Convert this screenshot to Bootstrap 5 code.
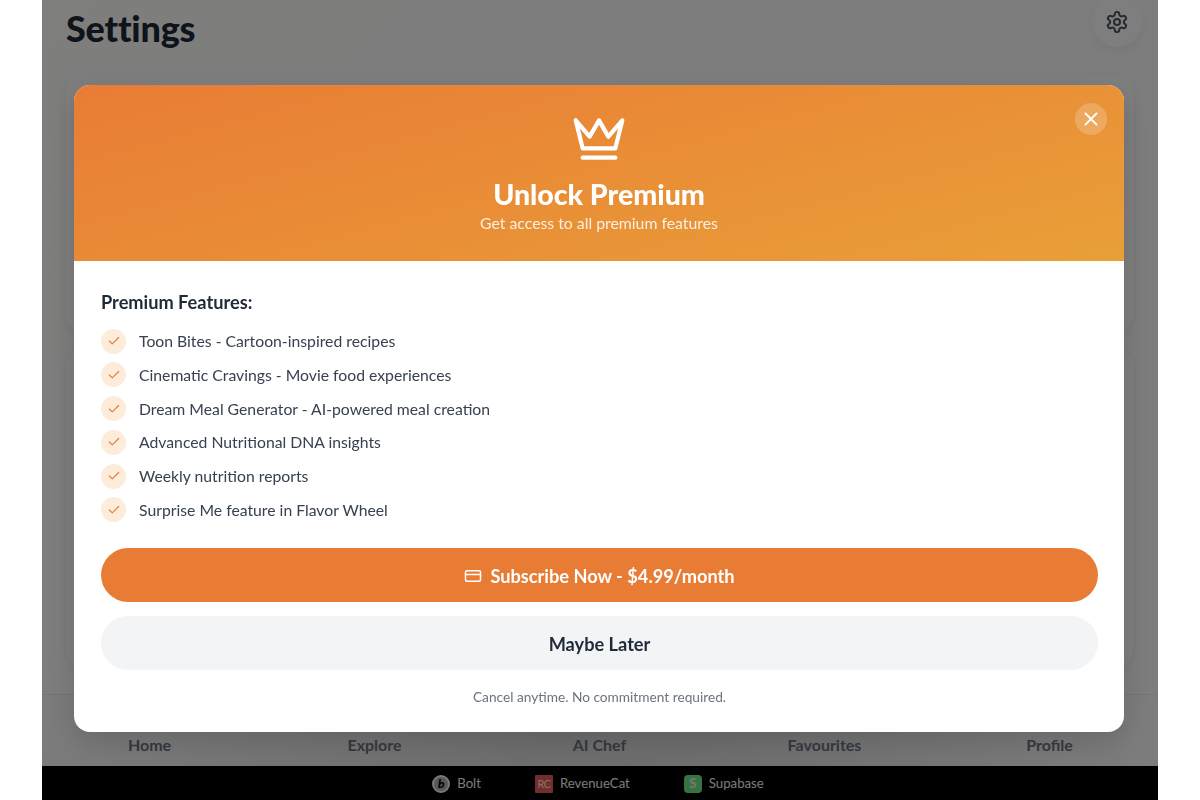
<!DOCTYPE html>
<html lang="en">
<head>
    <meta charset="UTF-8">
    <meta name="viewport" content="width=device-width, initial-scale=1.0">
    <title>Settings</title>
    <link rel="stylesheet" href="https://cdn.jsdelivr.net/npm/bootstrap@5.3.2/dist/css/bootstrap.min.css">
    <style>
        html, body {
            height: 100%;
            overflow: hidden;
        }
        body {
            background: #fff;
            font-family: Lato, "Noto Sans", sans-serif;
            color: #1f2937;
        }
        .app-frame {
            width: 1116px;
            height: 800px;
            margin: 0 auto;
            background: linear-gradient(135deg, #fcfcfb, #fafafa);
        }
        .page-head {
            margin-top: -3px;
            padding: 0 16px 0 24px;
            height: 78px;
        }
        .page-title {
            font-size: 36px;
            font-weight: 900;
            color: #1f2937;
            margin: 10px 0 0;
            letter-spacing: -.2px;
        }
        .gear-btn {
            width: 50px;
            height: 50px;
            background: #fdfdfd;
            box-shadow: 0 4px 12px rgba(0, 0, 0, .06);
            color: #4b5563;
        }
        .page-body {
            padding: 0 25px 0 24px;
            height: 619px;
        }
        .bg-panel {
            border-radius: 14px;
            background: #fdfdfd;
            box-shadow: 0 2px 10px rgba(0, 0, 0, .06);
        }
        .bg-panel-a { height: 255px; margin-bottom: 20px; }
        .bg-panel-b { height: 315px; }
        .tab-bar {
            height: 72px;
            border-top: 1px solid #e9eaea;
            background: linear-gradient(100deg, #f8f8f8, #dcdcdc 45%, #dedede 60%, #fafafa);
        }
        .tab-row { margin: 0 -4px 0 -5px; width: calc(100% + 9px); }
        .tab-item {
            flex: 1 1 0;
            text-align: center;
            padding-top: 38px;
            font-size: 16px;
            font-weight: 700;
            color: #6b7280;
        }
        .credit-bar {
            height: 34px;
            padding: 2px 4px 0 0;
            background: #000;
            font-size: 13.2px;
            color: #f3f4f6;
        }
        .credit-item { gap: 7px; }
        .credit-item + .credit-item { margin-left: 54px; }
        .credit-bolt {
            width: 18px;
            height: 18px;
            background: #b0b0b0;
            color: #000;
            font-size: 12px;
            font-weight: 900;
            font-style: italic;
            border: 2px solid #f0f0f0;
        }
        .credit-rc, .credit-s {
            width: 18px;
            height: 18px;
        }
        .credit-rc {
            background: #e65a5a;
            color: #fbe3e3;
            font-size: 11px;
            letter-spacing: -.5px;
            border-radius: 1px;
        }
        .credit-s {
            background: #6ee682;
            color: #f0f0f0;
            font-size: 13px;
            font-weight: 700;
            border-radius: 4px;
        }
        .dim-layer {
            position: fixed;
            top: 0;
            bottom: 0;
            left: 42px;
            width: 1116px;
            padding-top: 85px;
            background: rgba(0, 0, 0, .5);
        }
        .promo-box {
            width: 1050px;
            height: 647px;
            margin-left: 32px;
            background: #fff;
            border-radius: 16px;
            overflow: hidden;
            box-shadow: 0 10px 30px rgba(0, 0, 0, .15);
        }
        .promo-head {
            position: relative;
            height: 176px;
            padding-top: 26px;
            color: #fff;
            background: linear-gradient(165deg, #e97c35, #e99f38);
        }
        .promo-title {
            font-size: 28.5px;
            font-weight: 900;
            margin: 10px 0 0;
            line-height: 34px;
        }
        .promo-sub {
            font-size: 15.8px;
            line-height: 22px;
            margin-top: 1px;
            color: rgba(255, 255, 255, .85);
        }
        .close-btn {
            position: absolute;
            top: 18px;
            right: 17px;
            width: 32px;
            height: 32px;
            background: rgba(255, 255, 255, .2);
            color: #fff;
        }
        .promo-body {
            padding: 29px 26px 0 27px;
        }
        .feat-heading {
            font-size: 18.2px;
            font-weight: 700;
            line-height: 24px;
            margin-bottom: 14.5px;
            color: #1f2937;
        }
        .feat-row {
            height: 25px;
            margin-bottom: 8.75px;
            font-size: 15.75px;
            color: #374151;
            gap: 13px;
        }
        .feat-tick {
            width: 25px;
            height: 25px;
            background: #fdecd9;
            color: #e97c35;
            flex-shrink: 0;
        }
        .btn-subscribe, .btn-later {
            width: 100%;
            height: 54px;
            border: 0;
            border-radius: 27px;
            font-size: 18.2px;
            font-weight: 700;
            padding-top: 3px;
        }
        .btn-subscribe {
            margin-top: 26px;
            background: #e97c35;
            color: #fff;
            gap: 8px;
        }
        .btn-later {
            margin-top: 14px;
            background: #f3f4f6;
            color: #1f2937;
        }
        .fine-print {
            margin-top: 18px;
            font-size: 13.7px;
            line-height: 18px;
            color: #6b7280;
            text-align: center;
        }
    </style>
</head>
<body>

    <div class="app-frame d-flex flex-column">
        <div class="page-head d-flex justify-content-between align-items-start">
            <h1 class="page-title">Settings</h1>
            <div class="gear-btn rounded-circle d-flex align-items-center justify-content-center">
                <svg width="24" height="24" viewBox="0 0 24 24" fill="none" stroke="currentColor" stroke-width="2" stroke-linecap="round" stroke-linejoin="round"><path d="M12.22 2h-.44a2 2 0 0 0-2 2v.18a2 2 0 0 1-1 1.73l-.43.25a2 2 0 0 1-2 0l-.15-.08a2 2 0 0 0-2.73.73l-.22.38a2 2 0 0 0 .73 2.73l.15.1a2 2 0 0 1 1 1.72v.51a2 2 0 0 1-1 1.74l-.15.09a2 2 0 0 0-.73 2.73l.22.38a2 2 0 0 0 2.73.73l.15-.08a2 2 0 0 1 2 0l.43.25a2 2 0 0 1 1 1.73V20a2 2 0 0 0 2 2h.44a2 2 0 0 0 2-2v-.18a2 2 0 0 1 1-1.73l.43-.25a2 2 0 0 1 2 0l.15.08a2 2 0 0 0 2.73-.73l.22-.39a2 2 0 0 0-.73-2.73l-.15-.08a2 2 0 0 1-1-1.74v-.5a2 2 0 0 1 1-1.74l.15-.09a2 2 0 0 0 .73-2.73l-.22-.38a2 2 0 0 0-2.73-.73l-.15.08a2 2 0 0 1-2 0l-.43-.25a2 2 0 0 1-1-1.73V4a2 2 0 0 0-2-2z"/><circle cx="12" cy="12" r="3"/></svg>
            </div>
        </div>

        <div class="page-body">
            <div class="bg-panel bg-panel-a"></div>
            <div class="bg-panel bg-panel-b"></div>
        </div>

        <div class="tab-bar">
            <div class="tab-row d-flex">
                <div class="tab-item">Home</div>
                <div class="tab-item">Explore</div>
                <div class="tab-item">AI Chef</div>
                <div class="tab-item">Favourites</div>
                <div class="tab-item">Profile</div>
            </div>
        </div>

        <div class="credit-bar d-flex align-items-center justify-content-center">
            <div class="credit-item d-flex align-items-center">
                <span class="credit-bolt rounded-circle d-flex align-items-center justify-content-center">b</span>
                <span>Bolt</span>
            </div>
            <div class="credit-item d-flex align-items-center">
                <span class="credit-rc d-flex align-items-center justify-content-center">RC</span>
                <span>RevenueCat</span>
            </div>
            <div class="credit-item d-flex align-items-center">
                <span class="credit-s d-flex align-items-center justify-content-center">S</span>
                <span>Supabase</span>
            </div>
        </div>
    </div>

    <div class="dim-layer">
        <div class="promo-box">
            <div class="promo-head text-center">
                <div class="close-btn rounded-circle d-flex align-items-center justify-content-center">
                    <svg width="22" height="22" viewBox="0 0 24 24" fill="none" stroke="currentColor" stroke-width="2" stroke-linecap="round" stroke-linejoin="round"><path d="M18 6 6 18M6 6l12 12"/></svg>
                </div>
                <svg class="d-block mx-auto" width="56" height="56" viewBox="0 0 24 24" fill="none" stroke="currentColor" stroke-width="1.8" stroke-linecap="round" stroke-linejoin="round"><path d="m2 4 3 12h14l3-12-6 7-4-7-4 7-6-7z"/><path d="M5 20h14"/></svg>
                <h2 class="promo-title">Unlock Premium</h2>
                <div class="promo-sub">Get access to all premium features</div>
            </div>
            <div class="promo-body">
                <div class="feat-heading">Premium Features:</div>
                <div class="feat-row d-flex align-items-center"><span class="feat-tick rounded-circle d-flex align-items-center justify-content-center"><svg width="14" height="14" viewBox="0 0 24 24" fill="none" stroke="currentColor" stroke-width="2" stroke-linecap="round" stroke-linejoin="round"><path d="M20 6 9 17l-5-5"/></svg></span>Toon Bites - Cartoon-inspired recipes</div>
                <div class="feat-row d-flex align-items-center"><span class="feat-tick rounded-circle d-flex align-items-center justify-content-center"><svg width="14" height="14" viewBox="0 0 24 24" fill="none" stroke="currentColor" stroke-width="2" stroke-linecap="round" stroke-linejoin="round"><path d="M20 6 9 17l-5-5"/></svg></span>Cinematic Cravings - Movie food experiences</div>
                <div class="feat-row d-flex align-items-center"><span class="feat-tick rounded-circle d-flex align-items-center justify-content-center"><svg width="14" height="14" viewBox="0 0 24 24" fill="none" stroke="currentColor" stroke-width="2" stroke-linecap="round" stroke-linejoin="round"><path d="M20 6 9 17l-5-5"/></svg></span>Dream Meal Generator - AI-powered meal creation</div>
                <div class="feat-row d-flex align-items-center"><span class="feat-tick rounded-circle d-flex align-items-center justify-content-center"><svg width="14" height="14" viewBox="0 0 24 24" fill="none" stroke="currentColor" stroke-width="2" stroke-linecap="round" stroke-linejoin="round"><path d="M20 6 9 17l-5-5"/></svg></span>Advanced Nutritional DNA insights</div>
                <div class="feat-row d-flex align-items-center"><span class="feat-tick rounded-circle d-flex align-items-center justify-content-center"><svg width="14" height="14" viewBox="0 0 24 24" fill="none" stroke="currentColor" stroke-width="2" stroke-linecap="round" stroke-linejoin="round"><path d="M20 6 9 17l-5-5"/></svg></span>Weekly nutrition reports</div>
                <div class="feat-row d-flex align-items-center"><span class="feat-tick rounded-circle d-flex align-items-center justify-content-center"><svg width="14" height="14" viewBox="0 0 24 24" fill="none" stroke="currentColor" stroke-width="2" stroke-linecap="round" stroke-linejoin="round"><path d="M20 6 9 17l-5-5"/></svg></span>Surprise Me feature in Flavor Wheel</div>
                <button type="button" class="btn-subscribe d-flex align-items-center justify-content-center">
                    <svg width="18" height="18" viewBox="0 0 24 24" fill="none" stroke="currentColor" stroke-width="2" stroke-linecap="round" stroke-linejoin="round"><rect x="2" y="5" width="20" height="14" rx="2"/><path d="M2 10h20"/></svg>
                    Subscribe Now - $4.99/month
                </button>
                <button type="button" class="btn-later d-block">Maybe Later</button>
                <div class="fine-print">Cancel anytime. No commitment required.</div>
            </div>
        </div>
    </div>

</body>
</html>
